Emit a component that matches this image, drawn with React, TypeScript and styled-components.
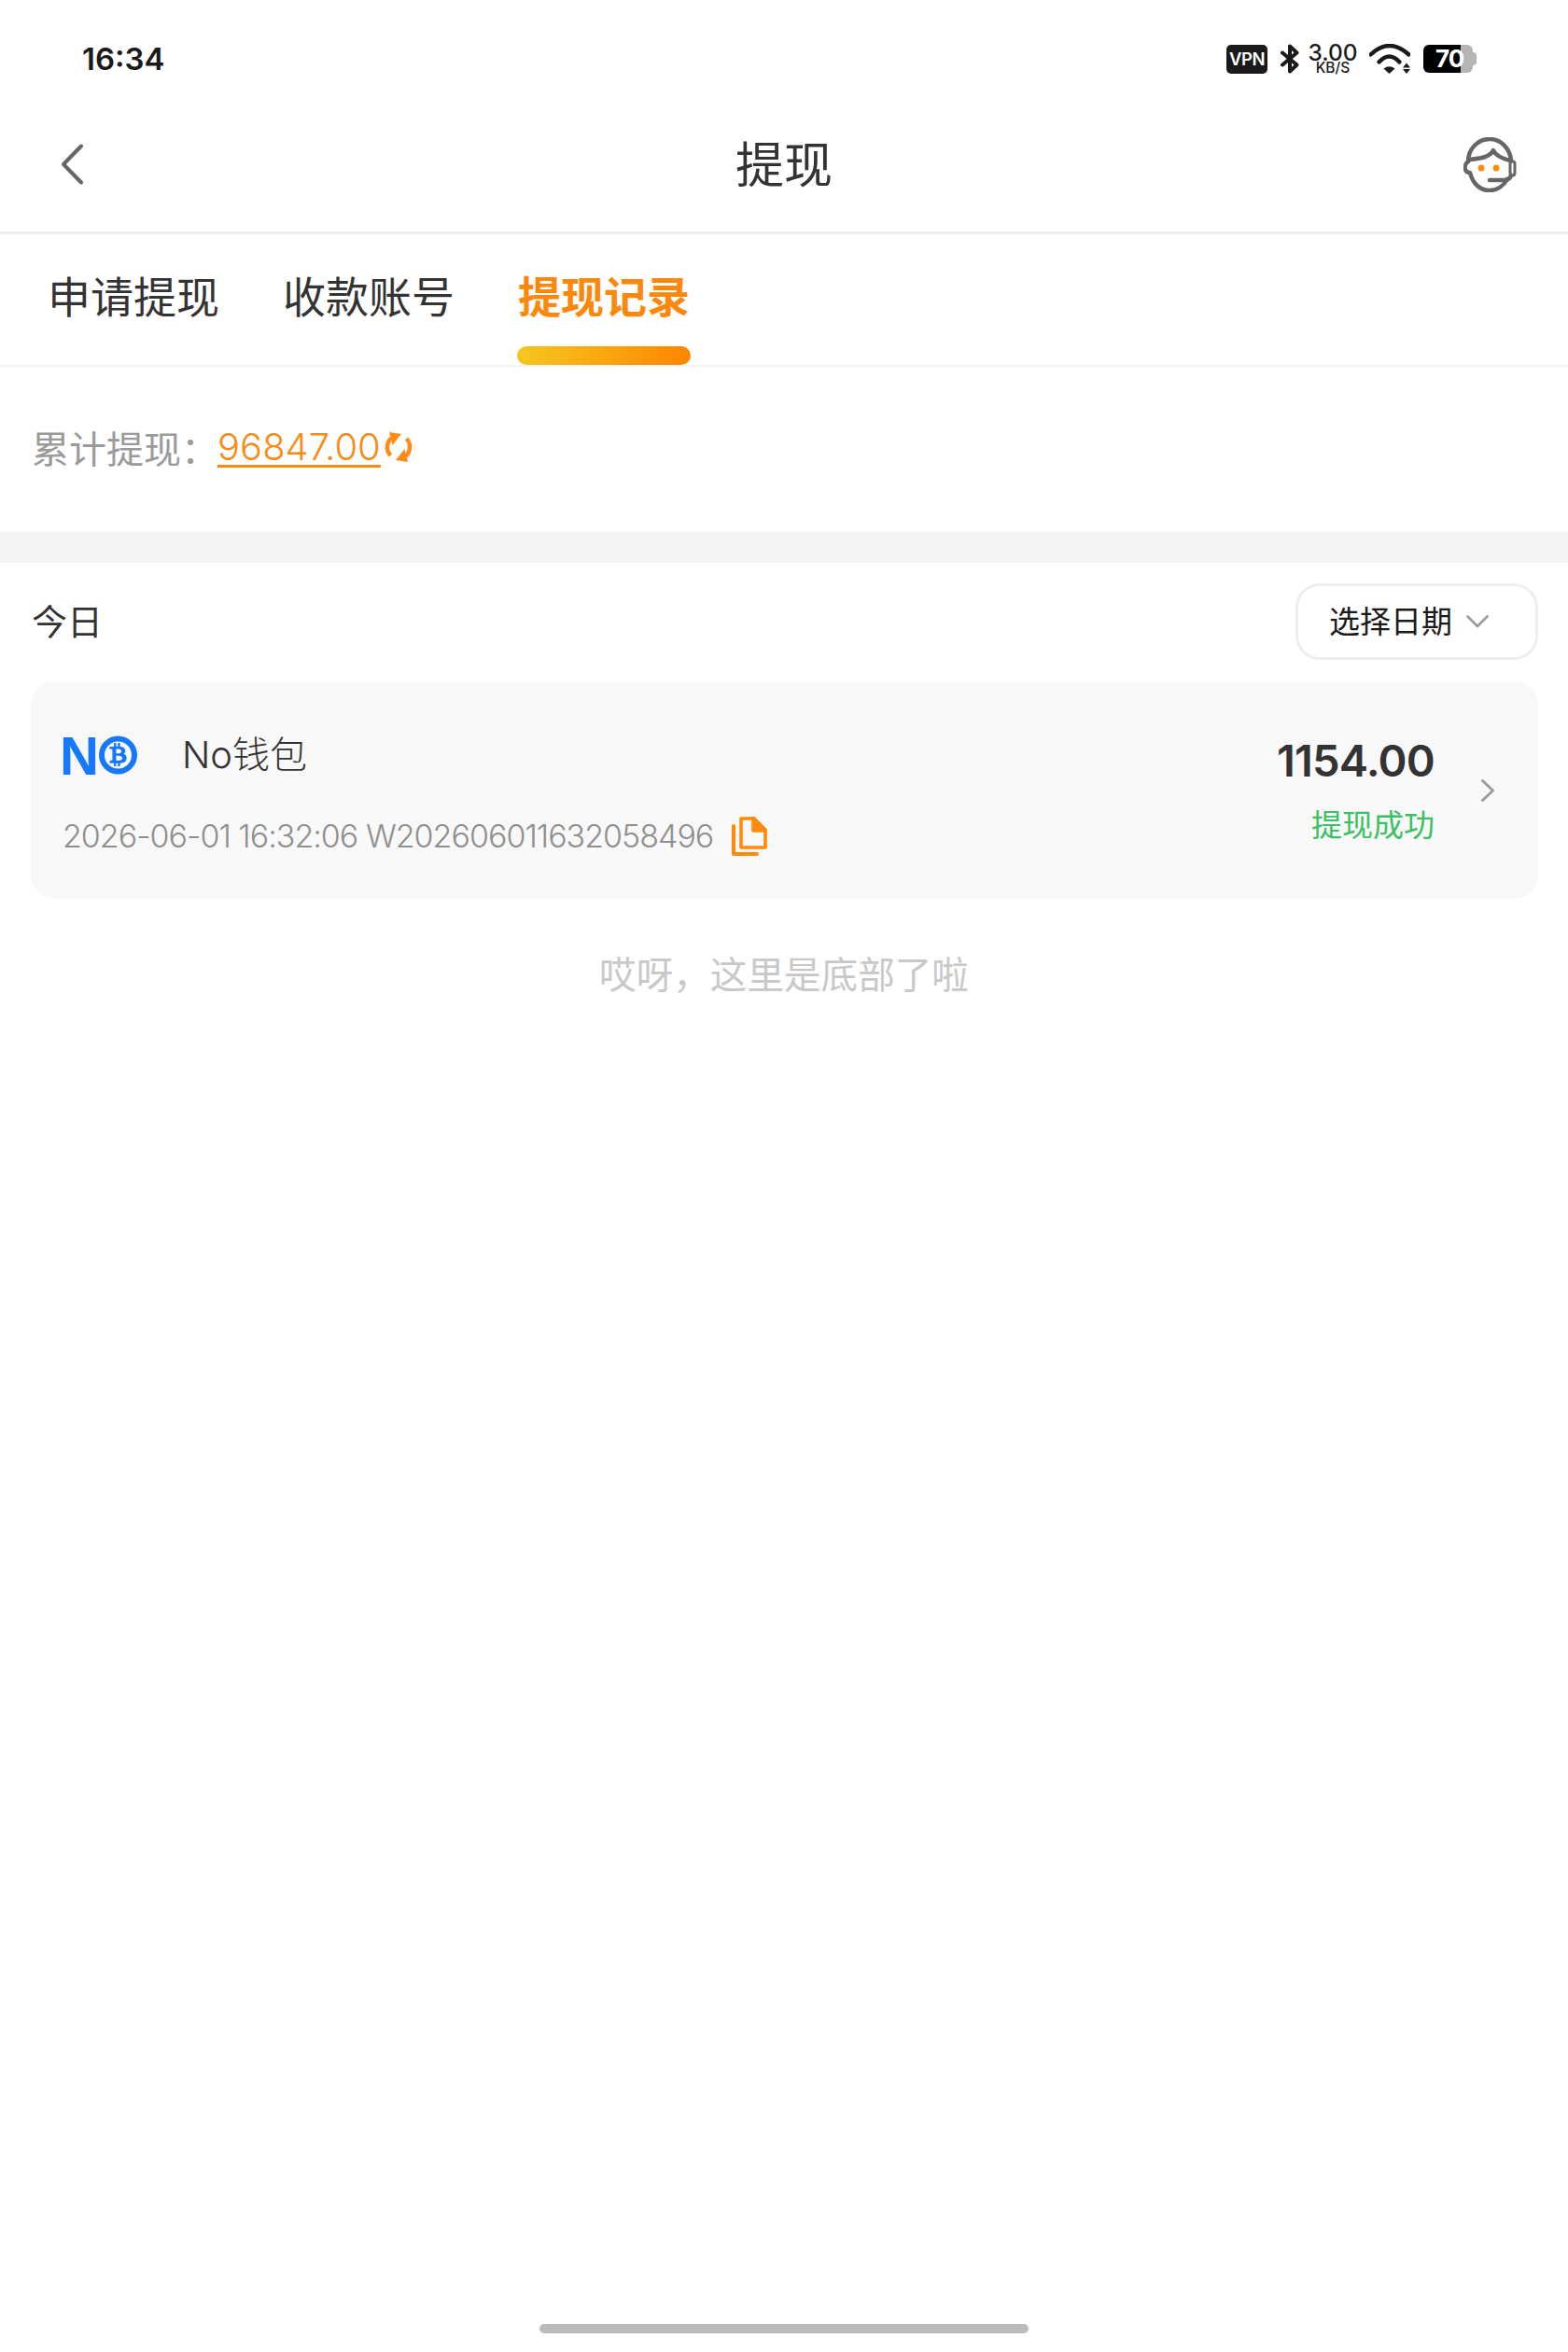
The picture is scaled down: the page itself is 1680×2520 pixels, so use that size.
import React from "react"
import styled, { createGlobalStyle } from "styled-components"
import { FaBtc } from "react-icons/fa"

const GlobalStyle = createGlobalStyle`
  html, body {
    margin: 0;
    padding: 0;
    background: #fff;
  }
  * {
    box-sizing: border-box;
  }
  body {
    font-family: Inter, "Noto Sans CJK SC", sans-serif;
  }
`

const tabs = ["申请提现", "收款账号", "提现记录"]

export default function App() {
  return (
    <Page>
      <GlobalStyle />
      <StatusBar>
        <Clock>16:34</Clock>
        <StatusIcons>
          <VpnBadge>VPN</VpnBadge>
          <svg width="20" height="32" viewBox="0 0 20 32" fill="none" stroke="#1a1a1a" strokeWidth="4" strokeLinejoin="round" strokeLinecap="round">
            <path d="M2 9.500 17.500 22.500 10 29.500V2.500L17.500 9.500 2 22.500" />
          </svg>
          <Speed>
            <SpeedValue>3.00</SpeedValue>
            <SpeedUnit>KB/S</SpeedUnit>
          </Speed>
          <svg width="44" height="32" viewBox="0 0 44 32" fill="none">
            <path d="M1.500 11.500Q21.500-7.500 42.500 11.500" stroke="#1a1a1a" strokeWidth="4.400" strokeLinecap="round" />
            <path d="M10.500 19.500Q21.500 7.500 32.500 19.500" stroke="#1a1a1a" strokeWidth="4.400" strokeLinecap="round" />
            <path d="M15.500 26.500Q21.500 22 27.500 26.500L21.500 32Z" fill="#1a1a1a" />
            <path d="M36 25.500 40 20.500 44 25.500ZM36 27 44 27 40 32Z" fill="#1a1a1a" />
          </svg>
          <Battery>70</Battery>
        </StatusIcons>
      </StatusBar>

      <NavBar>
        <BackIcon width="26" height="44" viewBox="0 0 26 44" fill="none">
          <path d="M23 2.500 4 22 23 41.500" stroke="#666" strokeWidth="4" strokeLinecap="round" strokeLinejoin="round" />
        </BackIcon>
        <NavTitle>提现</NavTitle>
        <AgentIcon width="57" height="59" viewBox="0 0 57 59" fill="none" stroke="#666" strokeWidth="4.500" strokeLinecap="round" strokeLinejoin="round">
          <path d="M5 26C5 12 16 2 28 2 40 2 50 12 51 25" />
          <path d="M6 24C16 23 28 22 32 14 34 19 42 23 50 25" />
          <path d="M5 26C2 28 1 32 2 35 3 37 5 38 7 38 10 50 18 57 28 57 36 57 43 52 47 45" />
          <rect x="50" y="26" width="5" height="15" rx="2.500" strokeWidth="3" />
          <path d="M28 46H43C47 46 50 44 51 41" />
          <circle cx="19" cy="33" r="3.500" fill="#ff8a0c" stroke="none" />
          <circle cx="35" cy="33" r="3.500" fill="#ff8a0c" stroke="none" />
        </AgentIcon>
      </NavBar>

      <TabBar>
        {tabs.map((tab, i) => (
          <Tab key={tab} $active={i === 2}>
            <span>{tab}</span>
            {i === 2 && <TabMarker />}
          </Tab>
        ))}
      </TabBar>

      <Summary>
        <SummaryLabel>累计提现：</SummaryLabel>
        <SummaryAmount>96847.00</SummaryAmount>
        <svg width="32" height="32" viewBox="0 0 32 32" fill="none">
          <path d="M12 4.500A12.500 12.500 0 0 0 7.500 25" stroke="#ff8a14" strokeWidth="4.500" />
          <path d="M6 0 19 2 9.500 14Z" fill="#ff8a14" />
          <path d="M20 27.500A12.500 12.500 0 0 0 24.500 7" stroke="#ff8a14" strokeWidth="4.500" />
          <path d="M26 32 13 30 22.500 18Z" fill="#ff8a14" />
        </svg>
      </Summary>

      <Band />

      <SectionRow>
        <SectionTitle>今日</SectionTitle>
        <DateButton>
          <span>选择日期</span>
          <svg width="24" height="14" viewBox="0 0 24 14" fill="none">
            <path d="M1.500 1.500 12 12 22.500 1.500" stroke="#999" strokeWidth="2.600" strokeLinecap="round" strokeLinejoin="round" />
          </svg>
        </DateButton>
      </SectionRow>

      <RecordCard>
        <RecordInfo>
          <RecordHead>
            <LogoMark width="83" height="66" viewBox="0 -12 83 66">
              <text x="0" y="42" fontFamily="Liberation Sans" fontWeight="700" fontSize="58" fill="#1677ff" textLength="42" lengthAdjust="spacingAndGlyphs">N</text>
              <circle cx="62.500" cy="21" r="17.500" fill="#fff" stroke="#1677ff" strokeWidth="6" />
              <FaBtc x="50" y="8" size="25" color="#1677ff" />
            </LogoMark>
            <WalletName>No钱包</WalletName>
          </RecordHead>
          <RecordMeta>
            <MetaText>2026-06-01 16:32:06 W202606011632058496</MetaText>
            <svg width="38" height="42" viewBox="0 0 38 42" fill="none" stroke="#ff8a0c" strokeWidth="3.600" strokeLinecap="round" strokeLinejoin="round">
              <path d="M10 2H23L36 15V33H10Z" />
              <path d="M23 1 37 15H23Z" fill="#ff8a0c" />
              <path d="M2 10V40H27" strokeWidth="4" />
            </svg>
          </RecordMeta>
        </RecordInfo>
        <RecordResult>
          <Amount>1154.00</Amount>
          <StatusText>提现成功</StatusText>
        </RecordResult>
        <svg width="14" height="24" viewBox="0 0 14 24" fill="none">
          <path d="M1.500 1.500 12.500 12 1.500 22.500" stroke="#999" strokeWidth="2.800" strokeLinecap="round" strokeLinejoin="round" />
        </svg>
      </RecordCard>

      <EndNote>哎呀，这里是底部了啦</EndNote>

      <HomeIndicator />
    </Page>
  )
}

const Page = styled.div`
  display: flex;
  flex-direction: column;
  width: 1680px;
  height: 2520px;
  overflow: hidden;
  background: #fff;
`

const StatusBar = styled.div`
  display: flex;
  align-items: center;
  justify-content: space-between;
  height: 126px;
  padding: 0 102px 0 88px;
`

const Clock = styled.div`
  font-size: 33px;
  font-weight: 600;
  color: #1a1a1a;
`

const StatusIcons = styled.div`
  display: flex;
  align-items: center;
  gap: 14px;
`

const VpnBadge = styled.div`
  display: flex;
  align-items: center;
  justify-content: center;
  width: 44px;
  height: 31px;
  border-radius: 5px;
  background: #1a1a1a;
  color: #fff;
  font-size: 18.500px;
  font-weight: 600;
  letter-spacing: -0.500px;
`

const Speed = styled.div`
  display: flex;
  flex-direction: column;
  align-items: center;
  width: 50px;
  margin-left: -3px;
  color: #1a1a1a;
  font-weight: 500;
`

const SpeedValue = styled.div`
  height: 19px;
  font-size: 24.500px;
  line-height: 19px;
`

const SpeedUnit = styled.div`
  height: 13px;
  font-size: 15.500px;
  line-height: 13px;
`

const Battery = styled.div`
  position: relative;
  width: 53px;
  height: 30px;
  padding-left: 13px;
  border-radius: 6px;
  background: linear-gradient(to right, #000 40px, #b5b5b5 40px);
  color: #fff;
  font-size: 26px;
  font-weight: 700;
  line-height: 30px;
  letter-spacing: -1px;

  &::after {
    content: "";
    position: absolute;
    top: 8px;
    right: -4px;
    width: 4px;
    height: 14px;
    border-radius: 0 4px 4px 0;
    background: #b5b5b5;
  }
`

const NavBar = styled.div`
  display: grid;
  grid-template-columns: 1fr auto 1fr;
  align-items: center;
  height: 125px;
  padding: 0 55px 22px 55px;
  border-bottom: 3px solid #eee;
`

const BackIcon = styled.svg`
  margin-left: 9px;
`

const NavTitle = styled.div`
  margin-top: 4px;
  font-size: 52px;
  line-height: 60px;
  color: #333;
`

const AgentIcon = styled.svg`
  justify-self: end;
`

const TabBar = styled.div`
  display: flex;
  gap: 66px;
  height: 142px;
  padding-left: 50px;
  border-bottom: 2px solid #f2f2f2;
`

const Tab = styled.div<{ $active?: boolean }>`
  display: flex;
  flex-direction: column;
  align-items: center;
  justify-content: space-between;
  width: 186px;
  padding-top: 44px;
  font-size: 46px;
  line-height: 46px;
  font-weight: ${props => (props.$active ? 700 : 400)};
  color: ${props => (props.$active ? "#fb880c" : "#333")};
`

const TabMarker = styled.div`
  width: 186px;
  height: 20px;
  border-radius: 10px;
  background: linear-gradient(to right, #f6c71f, #ff8500);
`

const Summary = styled.div`
  display: flex;
  align-items: center;
  height: 177px;
  padding: 0 0 6px 34px;
`

const SummaryLabel = styled.span`
  flex: none;
  width: 199px;
  font-size: 40px;
  white-space: nowrap;
  color: #9a9a9a;
`

const SummaryAmount = styled.span`
  margin-right: 3px;
  font-size: 40px;
  font-weight: 300;
  color: #f98a14;
  text-decoration: underline;
  text-decoration-thickness: 3px;
  text-underline-offset: 5px;
`

const Band = styled.div`
  height: 33px;
  background: #f4f4f4;
`

const SectionRow = styled.div`
  display: flex;
  align-items: center;
  justify-content: space-between;
  margin-top: 22px;
  padding: 0 32px 0 34px;
`

const SectionTitle = styled.div`
  margin-bottom: 6px;
  font-size: 38px;
  color: #333;
`

const DateButton = styled.div`
  display: flex;
  align-items: center;
  gap: 15px;
  width: 260px;
  height: 82px;
  padding-left: 33px;
  border: 3px solid #eee;
  border-radius: 26px;
  font-size: 33px;
  line-height: 40px;
  color: #1a1a1a;
`

const RecordCard = styled.div`
  display: flex;
  align-items: center;
  height: 233px;
  margin: 23px 32px 0 33px;
  padding: 0 47px 0 34px;
  border-radius: 26px;
  background: #f8f8f8;
`

const RecordInfo = styled.div`
  flex: 1;
  display: flex;
  flex-direction: column;
  gap: 43px;
  margin-top: 10px;
`

const RecordHead = styled.div`
  display: flex;
  align-items: center;
  gap: 51px;
  height: 46px;
`

const LogoMark = styled.svg`
  margin: -12px -3px -12px -3px;
`

const WalletName = styled.div`
  font-size: 40px;
  font-weight: 300;
  line-height: 46px;
  color: #333;
`

const RecordMeta = styled.div`
  display: flex;
  align-items: center;
  gap: 20px;
`

const MetaText = styled.div`
  font-size: 34px;
  font-weight: 300;
  line-height: 42px;
  letter-spacing: -1px;
  color: #8f8f8f;
`

const RecordResult = styled.div`
  display: flex;
  flex-direction: column;
  align-items: flex-end;
  gap: 24px;
  margin: 0 50px 2px 0;
`

const Amount = styled.div`
  font-size: 47px;
  font-weight: 600;
  line-height: 52px;
  letter-spacing: -0.800px;
  color: #333;
`

const StatusText = styled.div`
  font-size: 33px;
  line-height: 38px;
  color: #3cc065;
`

const EndNote = styled.div`
  margin-top: 56px;
  text-align: center;
  font-size: 39.600px;
  line-height: 52px;
  color: #c8c8c8;
`

const HomeIndicator = styled.div`
  align-self: center;
  width: 524px;
  height: 10px;
  margin-top: auto;
  margin-bottom: 20px;
  border-radius: 5px;
  background: #bbb;
`
